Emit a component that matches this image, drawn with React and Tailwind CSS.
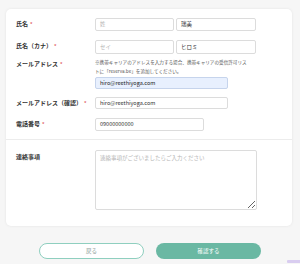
const font = { fontFamily: '"Noto Sans CJK JP", "Noto Sans", sans-serif' };

const Req = () => <span className="text-[#e05a5a] text-[5px] align-top ml-[2px]">*</span>;

const Row = ({ label, required, className = '', children }) => (
    <div className={`flex ${className}`}>
        <div className="w-[79px] shrink-0 text-[6px] font-bold text-[#333] leading-[9px] pt-[1px]">
            {label}
            {required && <Req />}
        </div>
        <div className="flex-1">{children}</div>
    </div>
);

const Field = ({ value, placeholder, className = '' }) => (
    <div
        className={`border border-[#dcdcdc] rounded-[2px] bg-white px-[4px] flex items-center text-[5.5px] ${className}`}
    >
        {value ? (
            <span className="text-[#333]">{value}</span>
        ) : (
            <span className="text-[#b5b5b5]">{placeholder}</span>
        )}
    </div>
);

export default function App() {
    return (
        <div className="w-[300px] h-[264px] bg-[#f6f6f6] relative overflow-hidden" style={font}>
            <div className="pt-[9px] px-[6px]">
                <div className="bg-white rounded-[5px] shadow-[0_0_3px_rgba(0,0,0,0.08)] w-[286px] pb-[16px]">
                    <div className="pt-[9px] pl-[10px]">
                        <Row label="氏名" required>
                            <div className="flex gap-[2px]">
                                <Field placeholder="姓" className="w-[79px] h-[13px]" />
                                <Field value="瑞美" className="w-[80px] h-[13px]" />
                            </div>
                        </Row>
                        <Row label="氏名（カナ）" required className="mt-[9px]">
                            <div className="flex gap-[2px]">
                                <Field placeholder="セイ" className="w-[79px] h-[14px]" />
                                <Field value="ヒロミ" className="w-[80px] h-[14px]" />
                            </div>
                        </Row>
                        <Row label="メールアドレス" required className="mt-[4px]">
                            <p className="text-[4.6px] leading-[9px] text-[#555] pt-[0px]">
                                ※携帯キャリアのアドレスを入力する場合、携帯キャリアの受信許可リス
                                <br />
                                トに「reserva.be」を追加してください。
                            </p>
                            <div className="mt-[1px] w-[133px] h-[12px] border border-[#c6d4ec] rounded-[2px] bg-[#e8f0fe] px-[4px] flex items-center text-[5.5px] text-[#222]">
                                hiro@reethiyoga.com
                            </div>
                        </Row>
                        <Row label="メールアドレス（確認）" required className="mt-[8px]">
                            <Field value="hiro@reethiyoga.com" className="w-[133px] h-[12px]" />
                        </Row>
                        <Row label="電話番号" required className="mt-[9px]">
                            <Field value="09000000000" className="w-[109px] h-[13px]" />
                        </Row>
                    </div>
                    <div className="border-t border-[#ececec] mt-[8px]" />
                    <div className="pt-[10px] pl-[10px]">
                        <Row label="連絡事項" className="pt-[1px]">
                            <textarea
                                readOnly
                                placeholder="連絡事項がございましたらご入力ください"
                                className="block w-[162px] h-[60px] -mt-[1px] border border-[#dcdcdc] rounded-[2px] px-[4px] py-[3px] text-[5.5px] leading-[8px] placeholder:text-[#b5b5b5] outline-none"
                                style={font}
                            />
                        </Row>
                    </div>
                </div>
            </div>
            <div className="flex justify-center gap-[12px] mt-[17px]">
                <button className="w-[105px] h-[16px] rounded-full border border-[#8fcfbf] bg-white text-[5.5px] text-[#8a9b96]">
                    戻る
                </button>
                <button className="w-[105px] h-[16px] rounded-full bg-[#6ab8a3] text-[5.5px] text-white">
                    確認する
                </button>
            </div>
            <div className="absolute right-0 bottom-[1px] w-[13px] h-[3px] bg-[#d9cdf0] rounded-l-[1px]" />
        </div>
    );
}
